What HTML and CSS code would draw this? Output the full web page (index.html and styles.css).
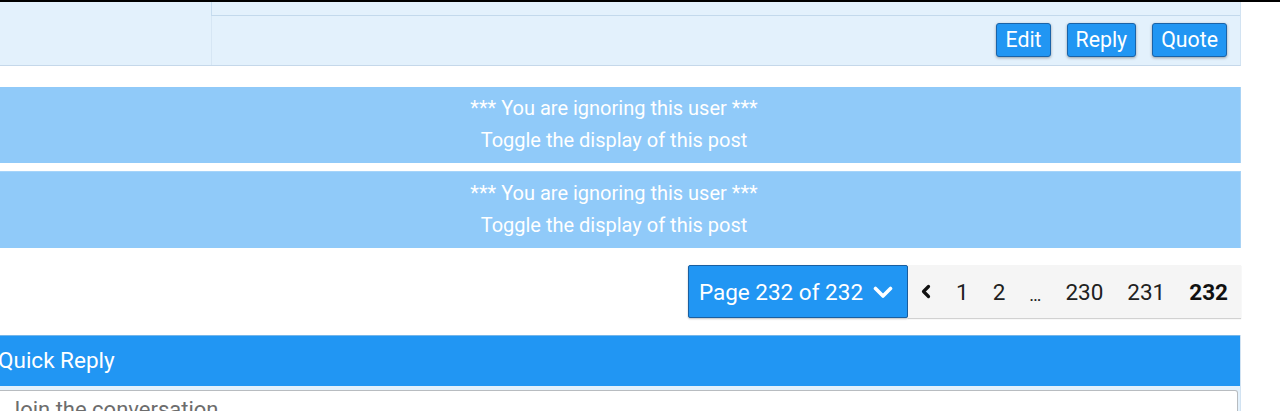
FILE: index.html
```html
<!DOCTYPE html>
<html lang="en">
<head>
<meta charset="utf-8">
<title>Thread</title>
<link rel="stylesheet" href="styles.css">
</head>
<body>
<div class="topline"></div>
<div class="page">
  <div class="post">
    <div class="post-side"></div>
    <div class="post-main">
      <div class="post-body"></div>
      <div class="post-actions">
        <a class="btn" href="#">Edit</a>
        <a class="btn" href="#">Reply</a>
        <a class="btn" href="#">Quote</a>
      </div>
    </div>
  </div>

  <div class="ignored">
    <div>*** You are ignoring this user ***</div>
    <a class="ignored-toggle" href="#">Toggle the display of this post</a>
  </div>
  <div class="ignored">
    <div>*** You are ignoring this user ***</div>
    <a class="ignored-toggle" href="#">Toggle the display of this post</a>
  </div>

  <div class="pager">
    <button class="pager-select" type="button">Page 232 of 232
      <svg class="chev-down" width="20" height="13" viewBox="0 0 20 13"><polyline points="2.5,2.5 10,10 17.5,2.5" fill="none" stroke="#fff" stroke-width="3.6" stroke-linecap="round" stroke-linejoin="round"/></svg>
    </button>
    <ul class="pager-list">
      <li><a href="#" class="prev"><svg width="10" height="15" viewBox="0 0 10 15"><polyline points="7.5,2.5 2.5,7.5 7.5,12.5" fill="none" stroke="#111" stroke-width="3.2" stroke-linecap="round" stroke-linejoin="round"/></svg></a></li>
      <li><a href="#">1</a></li>
      <li><a href="#">2</a></li>
      <li><span class="gap">…</span></li>
      <li><a href="#">230</a></li>
      <li><a href="#">231</a></li>
      <li><span class="current">232</span></li>
    </ul>
  </div>

  <div class="quick-reply">
    <div class="qr-head">Quick Reply</div>
    <div class="qr-body">
      <div class="qr-input">Join the conversation</div>
    </div>
  </div>
</div>
</body>
</html>
```

FILE: styles.css
```css
* { box-sizing: border-box; }

html, body {
  margin: 0;
  padding: 0;
  background: #fff;
  font-family: Roboto, "Noto Sans", Arial, sans-serif;
  overflow: hidden;
}

a { text-decoration: none; color: inherit; }

.topline {
  height: 2px;
  background: #000;
}

.page {
  width: 1241px;
}

/* post footer with action buttons */
.post {
  display: grid;
  grid-template-columns: 211px 1fr;
  background: #e3f1fc;
  border-right: 1px solid #d2e3f2;
  border-bottom: 1px solid #c5d8ea;
}

.post-main {
  border-left: 1px solid #d6e6f4;
}

.post-body {
  height: 14px;
  border-left: 1px solid #c6dcef;
  border-bottom: 1px solid #c3d9ec;
  margin-left: -1px;
}

.post-actions {
  display: flex;
  justify-content: flex-end;
  gap: 16px;
  padding: 7px 13px 8px 0;
}

.btn {
  display: block;
  height: 34px;
  line-height: 32px;
  padding: 0 8px;
  font-size: 21.3px;
  color: #fff;
  background: #2196f3;
  border: 1px solid #1a63a8;
  border-radius: 3px;
  box-shadow: 0 1px 3px rgba(0, 0, 0, 0.35);
}

/* ignored user notice */
.ignored {
  margin-top: 21px;
  background: #90caf9;
  color: #fff;
  text-align: center;
  font-size: 20px;
  line-height: 32px;
  padding: 5px 12px 7px 0;
  border-right: 1px solid #a9d3f5;
}

.ignored + .ignored {
  margin-top: 8px;
  border-top: 1px solid #a6d4fa;
}

.ignored-toggle {
  display: block;
}

/* pagination */
.pager {
  display: flex;
  justify-content: flex-end;
  margin-top: 17px;
  height: 53px;
}

.pager-select {
  display: flex;
  align-items: center;
  gap: 10px;
  height: 53px;
  padding: 0 14px 0 10px;
  font-family: inherit;
  font-size: 22.5px;
  color: #fff;
  background: #2196f3;
  border: 1px solid #1a5fa0;
  border-radius: 2px;
  box-shadow: 0 1px 2px rgba(0, 0, 0, 0.25);
}

.chev-down { margin-top: 1px; }

.pager-list {
  display: flex;
  margin: 0;
  padding: 0;
  list-style: none;
  background: #f5f5f5;
  box-shadow: 0 1px 1px rgba(0, 0, 0, 0.18);
}

.pager-list li {
  display: flex;
}

.pager-list a,
.pager-list span {
  display: flex;
  align-items: center;
  padding: 0 12px;
  font-size: 22.5px;
  color: #212121;
}

.pager-list .prev {
  padding: 0 13px;
}

.pager-list .gap {
  font-size: 18px;
  padding-top: 6px;
}

.pager-list .current {
  font-weight: 700;
  color: #111;
  padding-right: 13px;
}

/* quick reply box */
.quick-reply {
  margin-top: 17px;
  background: #e3f1fc;
  border-right: 1px solid #d2e3f2;
}

.qr-head {
  height: 51px;
  line-height: 49px;
  background: #2196f3;
  border-top: 1px solid #74b6ea;
  color: #fff;
  font-size: 22.5px;
  text-indent: -2px;
}

.qr-body {
  padding: 4px 2px 0 0;
}

.qr-input {
  height: 60px;
  background: #fff;
  border: 1px solid #b8bcc0;
  border-left: 0;
  border-radius: 0 3px 0 0;
  padding: 6px 0 0 8px;
  font-size: 22px;
  color: #6d6d6d;
}
```
